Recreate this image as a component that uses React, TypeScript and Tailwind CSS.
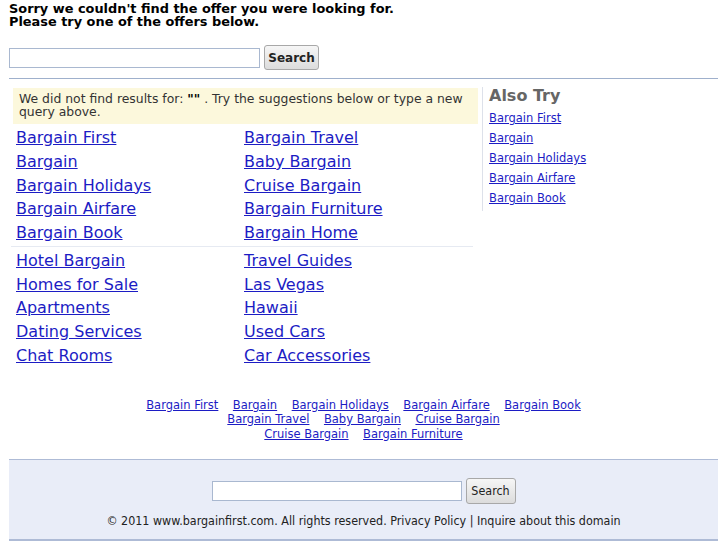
import React from "react";

const linkCls = "text-[#1c1cc4] underline";

const groupA = [
  ["Bargain First", "Bargain Travel"],
  ["Bargain", "Baby Bargain"],
  ["Bargain Holidays", "Cruise Bargain"],
  ["Bargain Airfare", "Bargain Furniture"],
  ["Bargain Book", "Bargain Home"],
];
const groupB = [
  ["Hotel Bargain", "Travel Guides"],
  ["Homes for Sale", "Las Vegas"],
  ["Apartments", "Hawaii"],
  ["Dating Services", "Used Cars"],
  ["Chat Rooms", "Car Accessories"],
];
const also = ["Bargain First", "Bargain", "Bargain Holidays", "Bargain Airfare", "Bargain Book"];
const bottomRows = [
  ["Bargain First", "Bargain", "Bargain Holidays", "Bargain Airfare", "Bargain Book"],
  ["Bargain Travel", "Baby Bargain", "Cruise Bargain"],
  ["Cruise Bargain", "Bargain Furniture"],
];

function LinkGrid({ rows, className }: { rows: string[][]; className?: string }) {
  return (
    <div className={"grid grid-cols-[228px_1fr] pl-[7px] " + (className ?? "")}>
      {rows.map(([a, b]) => (
        <React.Fragment key={a}>
          <div className="text-[16px] leading-[23.75px]">
            <a href="#" className={linkCls}>{a}</a>
          </div>
          <div className="text-[16px] leading-[23.75px]">
            <a href="#" className={linkCls}>{b}</a>
          </div>
        </React.Fragment>
      ))}
    </div>
  );
}

export default function App() {
  return (
    <div className="w-[727px] min-h-[545px] bg-white font-['DejaVu_Sans','Liberation_Sans',sans-serif] text-black">
      <div className="px-[9px]">
        <h1 className="pt-[2px] text-[12.9px] leading-[13px] font-bold">
          Sorry we couldn't find the offer you were looking for.
          <br />
          Please try one of the offers below.
        </h1>
        <div className="mt-[17px] flex items-center gap-[4px] h-[25px]">
          <input
            type="text"
            className="w-[251px] h-[20px] border border-[#a9b8d0] bg-white outline-none"
          />
          <button className="h-[25px] w-[55px] rounded-[3px] border border-[#a8a8a8] bg-gradient-to-b from-[#f6f6f6] to-[#dcdcdc] text-[12px] font-bold text-[#222]">
            Search
          </button>
        </div>
        <div className="mt-[8px] border-t border-[#9fb0cc]" />

        <div className="flex">
          <div className="w-[470px] pt-[9px]">
            <div className="ml-[4px] h-[36px] w-[465px] bg-[#fcf8dc] pl-[6px] pr-[6px] pt-[4px] text-[12.4px] leading-[13px] text-[#333]">
              We did not find results for: <b className="text-black">""</b> . Try the suggestions below or type a new query above.
            </div>
            <LinkGrid rows={groupA} className="mt-[2px]" />
            <div className="mx-[2px] mt-[1px] mb-[2px] w-[462px] border-t border-[#e6eaf2]" />
            <LinkGrid rows={groupB} />
          </div>
          <div className="ml-[3px] mt-[8px] self-start border-l border-[#dde1ea] pl-[6px] pb-[3px]">
            <div className="text-[16px] leading-[18px] font-bold text-[#666]">Also Try</div>
            <div className="mt-[3px] flex flex-col">
              {also.map((t) => (
                <div key={t} className="text-[11.5px] leading-[20px]">
                  <a href="#" className={linkCls}>{t}</a>
                </div>
              ))}
            </div>
          </div>
        </div>

        <div className="mt-[30px] flex flex-col items-center text-[11.5px] leading-[14.5px]">
          {bottomRows.map((row, i) => (
            <div key={i} className="flex gap-[14.5px]">
              {row.map((t) => (
                <a key={t} href="#" className={linkCls}>{t}</a>
              ))}
            </div>
          ))}
        </div>

        <div className="mt-[18px] border-t-[1.5px] border-b-[2px] border-[#aebbd6] bg-[#e9edf8] pt-[18px] pb-[11px]">
          <div className="flex justify-center items-center gap-[4px]">
            <input
              type="text"
              className="w-[250px] h-[20px] border border-[#a9b8d0] bg-white outline-none"
            />
            <button className="h-[26px] w-[50px] rounded-[3px] border border-[#a8a8a8] bg-gradient-to-b from-[#f6f6f6] to-[#dcdcdc] text-[12.4px] text-[#222] font-['DejaVu_Sans_Condensed','DejaVu_Sans',sans-serif]">
              Search
            </button>
          </div>
          <div className="mt-[10px] text-center text-[12.4px] leading-[14px] text-[#222] font-['DejaVu_Sans_Condensed','DejaVu_Sans',sans-serif]">
            © 2011 www.bargainfirst.com. All rights reserved. Privacy Policy | Inquire about this domain
          </div>
        </div>
      </div>
    </div>
  );
}
